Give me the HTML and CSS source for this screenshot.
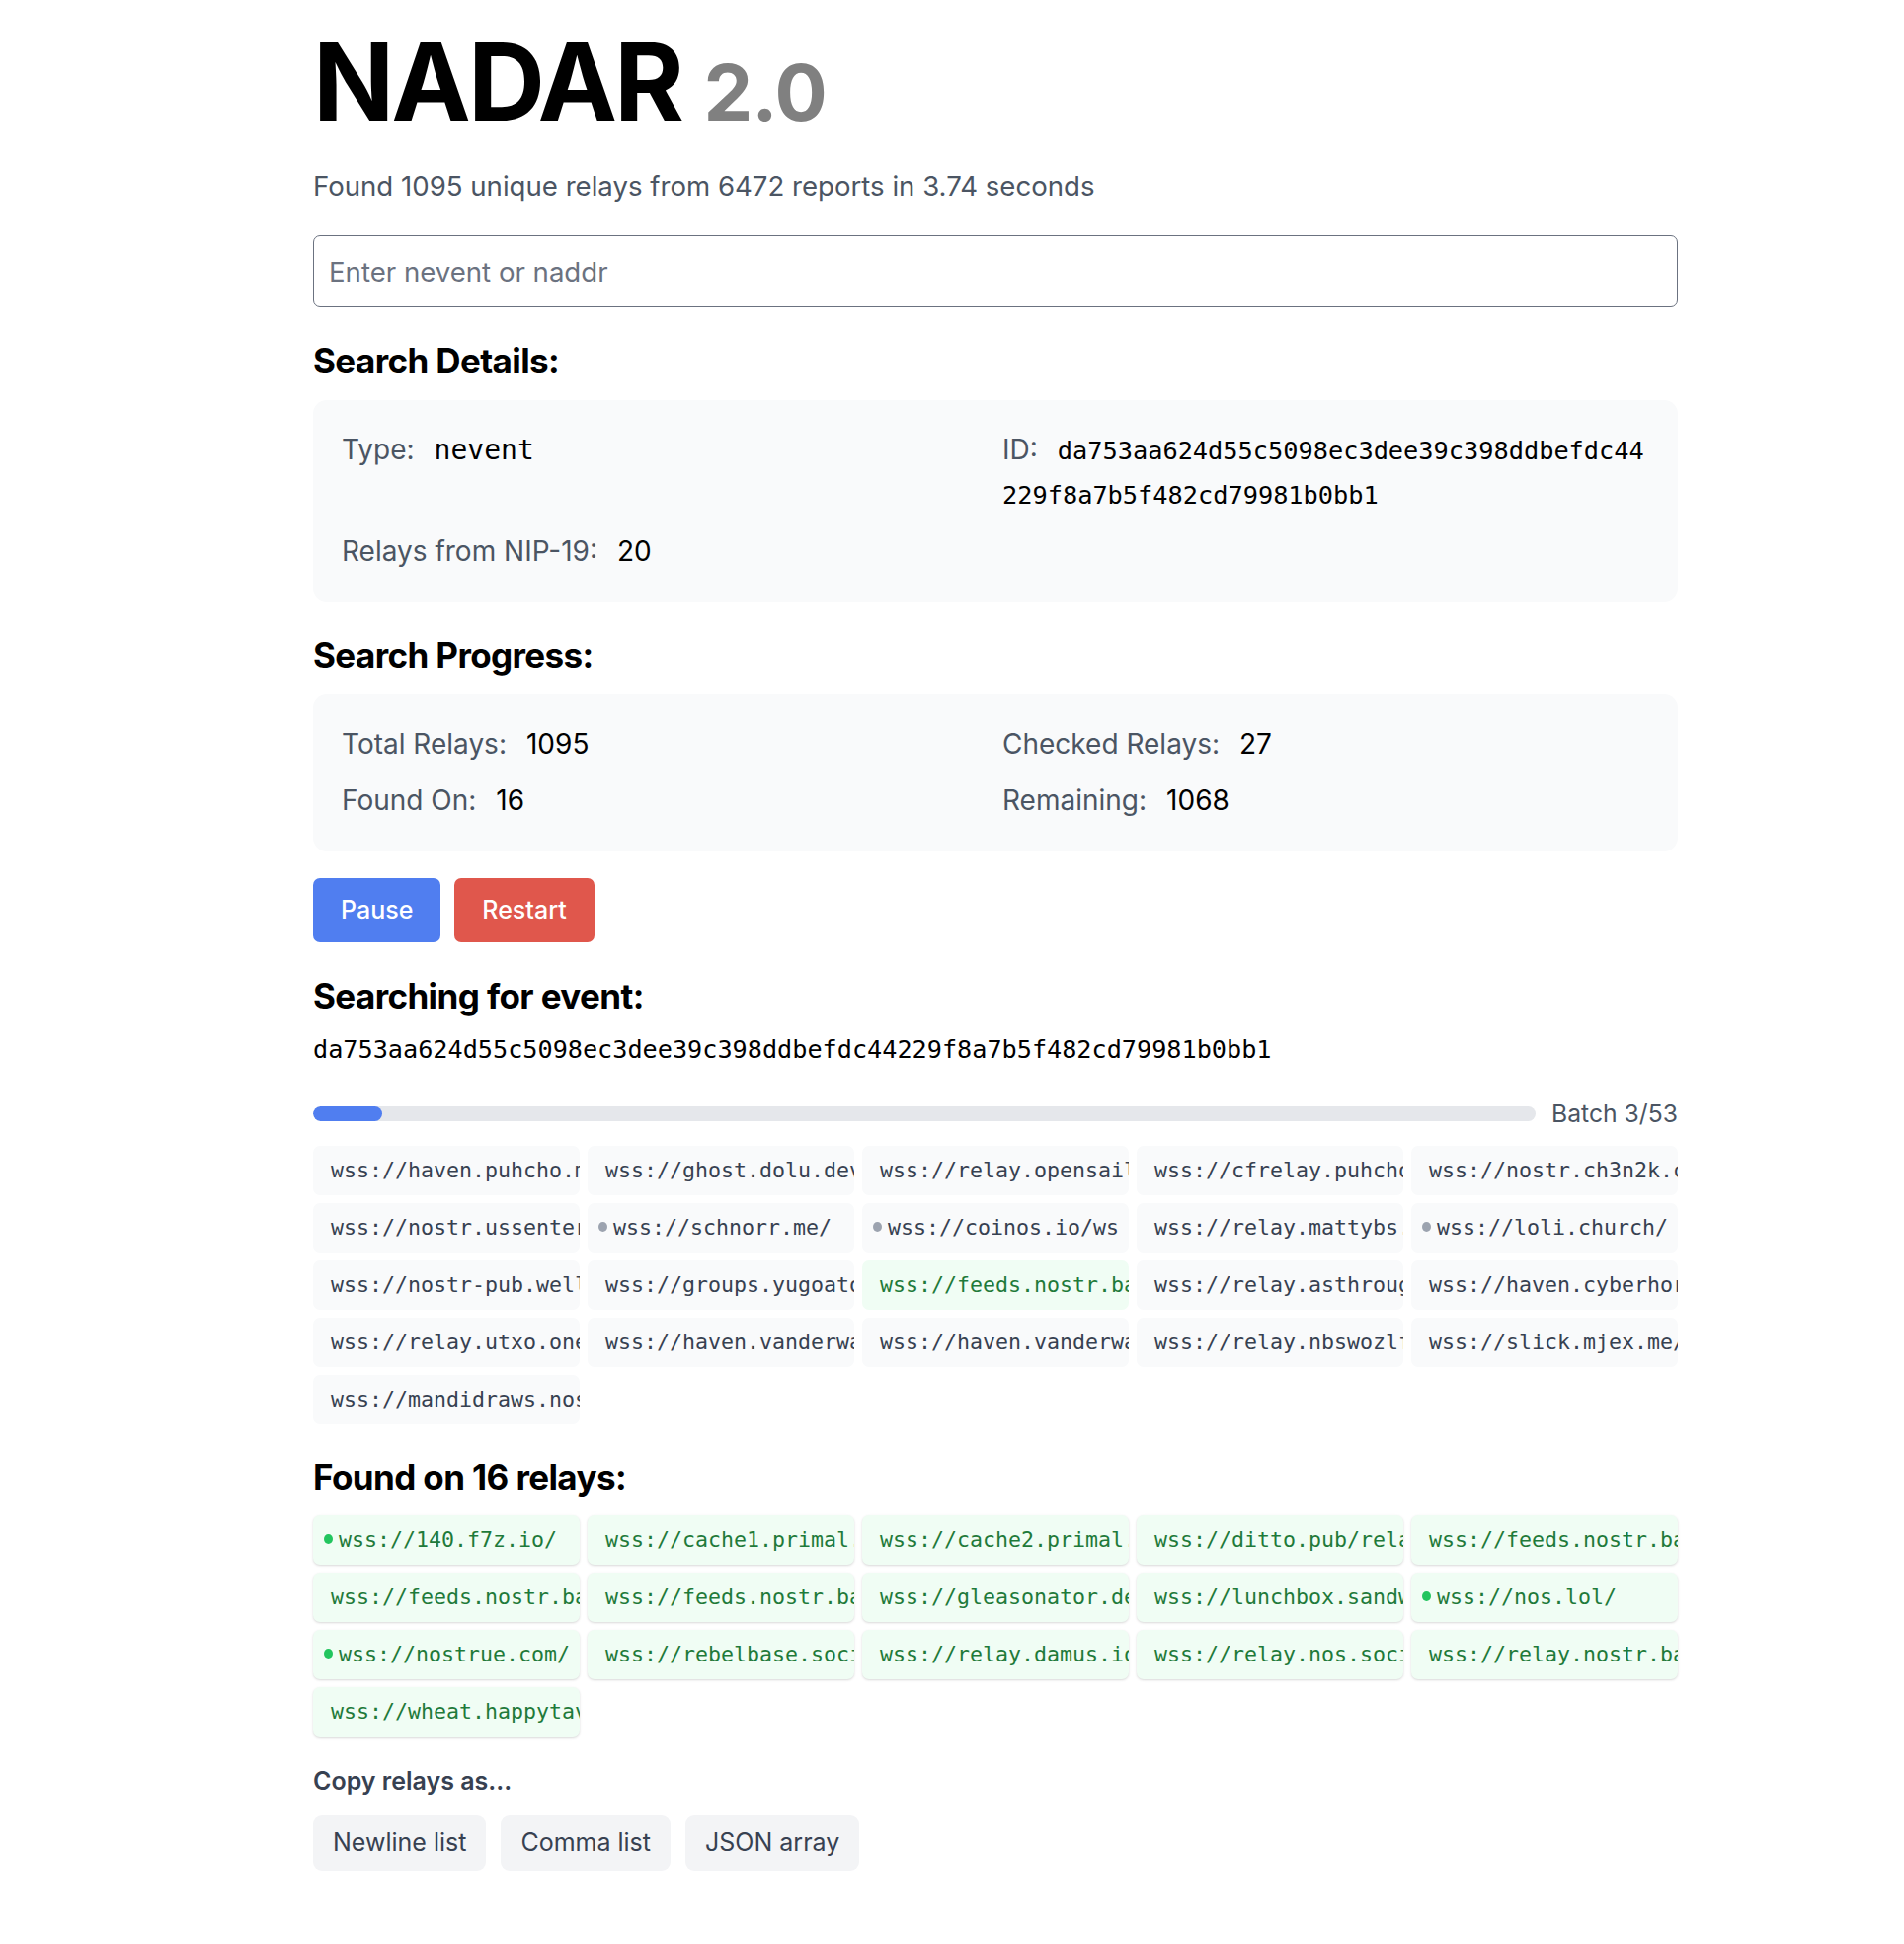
FILE: index.html
```html
<!DOCTYPE html>
<html lang="en">
<head>
<meta charset="utf-8">
<title>NADAR 2.0</title>
<link rel="stylesheet" href="styles.css">
</head>
<body>
<main class="page">
  <h1 class="title">NADAR <span class="version">2.0</span></h1>
  <p class="summary">Found 1095 unique relays from 6472 reports in 3.74 seconds</p>
  <input class="search" type="text" placeholder="Enter nevent or naddr">

  <h2 class="section-title">Search Details:</h2>
  <div class="panel">
    <div class="field"><span class="label">Type:</span><span class="mono-lg">nevent</span></div>
    <div class="field"><span class="label">ID:</span><span class="mono-id">da753aa624d55c5098ec3dee39c398ddbefdc44229f8a7b5f482cd79981b0bb1</span></div>
    <div class="field"><span class="label">Relays from NIP-19:</span><span class="value">20</span></div>
  </div>

  <h2 class="section-title">Search Progress:</h2>
  <div class="panel">
    <div class="field"><span class="label">Total Relays:</span><span class="value">1095</span></div>
    <div class="field"><span class="label">Checked Relays:</span><span class="value">27</span></div>
    <div class="field"><span class="label">Found On:</span><span class="value">16</span></div>
    <div class="field"><span class="label">Remaining:</span><span class="value">1068</span></div>
  </div>

  <div class="actions">
    <button class="btn btn-blue">Pause</button>
    <button class="btn btn-red">Restart</button>
  </div>

  <h2 class="section-title">Searching for event:</h2>
  <p class="event-id">da753aa624d55c5098ec3dee39c398ddbefdc44229f8a7b5f482cd79981b0bb1</p>

  <div class="batch">
    <div class="bar"><div class="bar-fill" style="width:5.66%"></div></div>
    <span class="batch-label">Batch 3/53</span>
  </div>

  <div class="chips">
    <div class="chip">wss://haven.puhcho.me/</div>
    <div class="chip">wss://ghost.dolu.dev/</div>
    <div class="chip">wss://relay.opensailor.net/</div>
    <div class="chip">wss://cfrelay.puhcho.me/</div>
    <div class="chip">wss://nostr.ch3n2k.com/</div>

    <div class="chip">wss://nostr.ussenterprise.xyz/</div>
    <div class="chip dotted"><span class="dot dot-gray"></span>wss://schnorr.me/</div>
    <div class="chip dotted"><span class="dot dot-gray"></span>wss://coinos.io/ws</div>
    <div class="chip">wss://relay.mattybs.lol/</div>
    <div class="chip dotted"><span class="dot dot-gray"></span>wss://loli.church/</div>

    <div class="chip">wss://nostr-pub.wellorder.net/</div>
    <div class="chip">wss://groups.yugoatobe.com/</div>
    <div class="chip chip-hit">wss://feeds.nostr.band/popular</div>
    <div class="chip">wss://relay.asthroughfire.net/</div>
    <div class="chip">wss://haven.cyberhornet.net/</div>

    <div class="chip">wss://relay.utxo.one/</div>
    <div class="chip">wss://haven.vanderwarker.family/</div>
    <div class="chip">wss://haven.vanderwarker.family/inbox</div>
    <div class="chip">wss://relay.nbswozlf.com/</div>
    <div class="chip">wss://slick.mjex.me/</div>

    <div class="chip">wss://mandidraws.nostr1.com/</div>
  </div>

  <h2 class="section-title">Found on 16 relays:</h2>
  <div class="chips">
    <div class="chip chip-found dotted"><span class="dot dot-green"></span>wss://140.f7z.io/</div>
    <div class="chip chip-found">wss://cache1.primal.net/v1</div>
    <div class="chip chip-found">wss://cache2.primal.net/v1</div>
    <div class="chip chip-found">wss://ditto.pub/relay</div>
    <div class="chip chip-found">wss://feeds.nostr.band/nostrhispano</div>

    <div class="chip chip-found">wss://feeds.nostr.band/popular</div>
    <div class="chip chip-found">wss://feeds.nostr.band/video</div>
    <div class="chip chip-found">wss://gleasonator.dev/relay</div>
    <div class="chip chip-found">wss://lunchbox.sandwich.farm/</div>
    <div class="chip chip-found dotted"><span class="dot dot-green"></span>wss://nos.lol/</div>

    <div class="chip chip-found dotted"><span class="dot dot-green"></span>wss://nostrue.com/</div>
    <div class="chip chip-found">wss://rebelbase.social/relay</div>
    <div class="chip chip-found">wss://relay.damus.io/</div>
    <div class="chip chip-found">wss://relay.nos.social/</div>
    <div class="chip chip-found">wss://relay.nostr.band/</div>

    <div class="chip chip-found">wss://wheat.happytavern.co/</div>
  </div>

  <p class="copy-title">Copy relays as...</p>
  <div class="copy-actions">
    <button class="btn-copy">Newline list</button>
    <button class="btn-copy">Comma list</button>
    <button class="btn-copy">JSON array</button>
  </div>
</main>
</body>
</html>
```

FILE: styles.css
```css
* { box-sizing: border-box; }

body {
  margin: 0;
  background: #ffffff;
  font-family: Inter, "Noto Sans", "Liberation Sans", sans-serif;
  color: #111827;
}

.page {
  width: 1382px;
  margin-left: 317px;
  padding-top: 28px;
  padding-bottom: 60px;
}

.title {
  margin: 0;
  font-size: 108px;
  line-height: 110px;
  font-weight: 700;
  letter-spacing: -3px;
  color: #000;
  white-space: nowrap;
}

.version {
  font-size: 79px;
  line-height: 1;
  letter-spacing: -1px;
  color: #808080;
}

.summary {
  margin: 29px 0 0;
  font-size: 27.6px;
  line-height: 42px;
  color: #4b5563;
}

.search {
  display: block;
  width: 100%;
  height: 73px;
  margin-top: 29px;
  padding: 0 15px;
  border: 1.5px solid #6b7280;
  border-radius: 7px;
  font-family: inherit;
  font-size: 27.6px;
  color: #111827;
  background: #fff;
}
.search::placeholder { color: #6b7280; }

.section-title {
  margin: 32px 0 0;
  font-size: 35px;
  line-height: 44px;
  font-weight: 700;
  letter-spacing: -0.6px;
  color: #000;
}

.panel {
  margin-top: 18px;
  padding: 29px 29px;
  background: #f9fafb;
  border-radius: 14px;
  display: grid;
  grid-template-columns: 1fr 1fr;
  column-gap: 14px;
  row-gap: 13px;
  font-size: 28px;
  line-height: 43.75px;
}

.field { min-width: 0; }

.label {
  color: #4b5563;
  margin-right: 20px;
}

.value { color: #000; }

.mono-lg {
  font-family: "DejaVu Sans Mono", "Liberation Mono", monospace;
  font-size: 28px;
  color: #000;
}

.mono-id {
  font-family: "DejaVu Sans Mono", "Liberation Mono", monospace;
  font-size: 25.3px;
  color: #000;
  word-break: break-all;
}

.actions {
  display: flex;
  gap: 14px;
  margin-top: 27px;
}

.btn {
  height: 65px;
  padding: 0 28px;
  border: none;
  border-radius: 7px;
  font-family: inherit;
  font-size: 25px;
  font-weight: 500;
  color: #fff;
}
.btn-blue { background: #507ef0; }
.btn-red { background: #e0574c; }

.actions + .section-title { margin-top: 32px; }

.event-id {
  margin: 14px 0 0;
  font-family: "DejaVu Sans Mono", "Liberation Mono", monospace;
  font-size: 25.2px;
  line-height: 37.5px;
  color: #000;
}

.batch {
  display: flex;
  align-items: center;
  gap: 16px;
  margin-top: 29px;
  height: 34px;
}

.bar {
  flex: 1;
  height: 15px;
  background: #e5e7eb;
  border-radius: 999px;
  overflow: hidden;
}
.bar-fill {
  height: 100%;
  background: #507ef0;
  border-radius: 999px;
}

.batch-label {
  font-size: 24.7px;
  color: #4b5563;
  white-space: nowrap;
}

.chips {
  margin-top: 16px;
  display: grid;
  grid-template-columns: repeat(5, 1fr);
  gap: 8px;
}

.section-title + .chips { margin-top: 17px; }

.chip {
  height: 50px;
  line-height: 50px;
  padding: 0 18px;
  border-radius: 7px;
  background: #f9fafb;
  color: #374151;
  font-family: "DejaVu Sans Mono", "Liberation Mono", monospace;
  font-size: 21.6px;
  white-space: nowrap;
  overflow: hidden;
}

.chip.dotted { padding-left: 11px; }

.chip-hit {
  background: #f0fdf4;
  color: #1f7a3a;
}

.chip-found {
  background: #f0fdf4;
  color: #1f7a3a;
  box-shadow: 0 1px 3px rgba(0, 0, 0, 0.1), 0 1px 2px rgba(0, 0, 0, 0.06);
}

.dot {
  display: inline-block;
  width: 9px;
  height: 10px;
  border-radius: 50%;
  margin-right: 6px;
  vertical-align: middle;
  position: relative;
  top: -2px;
}
.dot-gray { background: #9ca3af; }
.dot-green { background: #22c55e; }

.chips + .section-title { margin-top: 31px; }

.copy-title {
  margin: 27px 0 0;
  font-size: 25px;
  line-height: 37.5px;
  font-weight: 600;
  color: #374151;
}

.copy-actions {
  display: flex;
  gap: 15px;
  margin-top: 14px;
}

.btn-copy {
  height: 57px;
  padding: 0 20px;
  border: none;
  border-radius: 9px;
  background: #f3f4f6;
  color: #374151;
  font-family: inherit;
  font-size: 25px;
}
```
